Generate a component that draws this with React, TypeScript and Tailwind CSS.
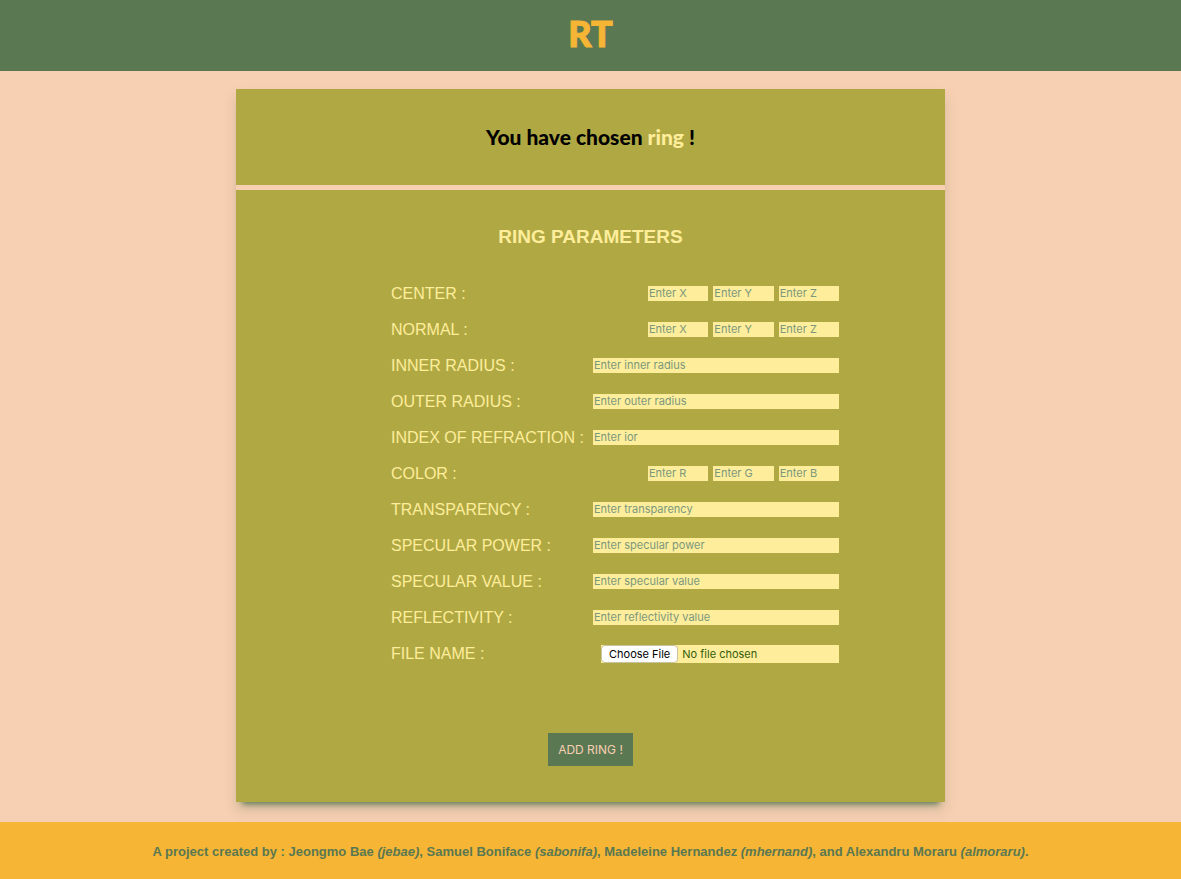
type Field = { label: string; name: string; hints: string[] };

const fields: Field[] = [
  { label: "CENTER :", name: "center", hints: ["Enter X", "Enter Y", "Enter Z"] },
  { label: "NORMAL :", name: "normal", hints: ["Enter X", "Enter Y", "Enter Z"] },
  { label: "INNER RADIUS :", name: "inner", hints: ["Enter inner radius"] },
  { label: "OUTER RADIUS :", name: "outer", hints: ["Enter outer radius"] },
  { label: "INDEX OF REFRACTION :", name: "ior", hints: ["Enter ior"] },
  { label: "COLOR :", name: "color", hints: ["Enter R", "Enter G", "Enter B"] },
  { label: "TRANSPARENCY :", name: "transparency", hints: ["Enter transparency"] },
  { label: "SPECULAR POWER :", name: "power", hints: ["Enter specular power"] },
  { label: "SPECULAR VALUE :", name: "value", hints: ["Enter specular value"] },
  { label: "REFLECTIVITY :", name: "reflectivity", hints: ["Enter reflectivity value"] },
];

const inputStyle =
  "h-[15px] min-w-0 flex-1 rounded-none bg-[#feed9b] px-px font-['Inter',sans-serif] text-[11px] leading-[15px] text-[#335c0a] outline-none placeholder:text-[#7b987b]";

function FieldRow({ label, name, hints }: Field) {
  return (
    <div className="flex h-9 items-center justify-between">
      <label htmlFor={`${name}-0`} className="whitespace-nowrap">
        {label}
      </label>
      <div className={hints.length > 1 ? "flex w-[191px] gap-[5px] pb-px" : "flex w-[246px] pb-px"}>
        {hints.map((hint, i) => (
          <input
            key={hint}
            id={`${name}-${i}`}
            name={`${name}-${i}`}
            type="text"
            aria-label={hint}
            placeholder={hint}
            className={inputStyle}
          />
        ))}
      </div>
    </div>
  );
}

export default function App() {
  return (
    <div className="flex min-h-screen flex-col bg-[#f7cfb2] font-['Liberation_Sans',Arial,sans-serif]">
      <header className="flex h-[71px] items-center justify-center bg-[#5a7852] pb-[6px]">
        <a
          href="#"
          className="font-['Lato',sans-serif] text-4xl font-black text-[#f6b534] [-webkit-text-stroke:1px_#f6b534]"
        >
          RT
        </a>
      </header>

      <main className="flex-1 pt-[18px] pb-5">
        <div className="mx-auto flex w-3/5 flex-col gap-[5px] bg-[#f7cfb2] shadow-[0_8px_6px_-6px_#5a7852,0_8px_12px_0_rgba(90,120,82,0.2)]">
          <section className="flex h-24 items-center justify-center bg-[#b0a943]">
            <h1 className="font-['Lato',sans-serif] text-[21px] font-black text-black">
              You have chosen <span className="text-[#feed9b]">ring</span> !
            </h1>
          </section>

          <section className="bg-[#b0a943] px-5 pt-[33px] pb-9 text-[#feed9b]">
            <h2 className="text-center text-[19px] leading-7 font-bold">RING PARAMETERS</h2>
            <form className="pt-[25px]" onSubmit={(e) => e.preventDefault()}>
              <div className="pl-[49px]">
                <div className="mx-auto w-[448px] max-w-full">
                  {fields.map((field) => (
                    <FieldRow key={field.name} {...field} />
                  ))}
                  <div className="flex h-9 items-center justify-between">
                    <label htmlFor="file">FILE NAME :</label>
                    <input
                      id="file"
                      type="file"
                      className="h-[18px] w-[238px] bg-[#feed9b] font-['Inter',sans-serif] text-[11px] leading-[18px] text-[#335c0a] file:mr-1 file:h-[18px] file:rounded file:border file:border-solid file:border-[#c9c4a0] file:bg-white file:px-[7px] file:leading-4 file:text-black"
                    />
                  </div>
                </div>
              </div>
              <div className="flex justify-center pt-[61px]">
                <button
                  type="submit"
                  className="h-[33px] bg-[#5a7852] px-[10px] font-['Inter',sans-serif] text-xs text-[#f7cfb2]"
                >
                  ADD RING !
                </button>
              </div>
            </form>
          </section>
        </div>
      </main>

      <footer className="bg-[#f6b534] px-4 pt-[21px] pb-[19px] text-center text-[13px] leading-[17px] font-bold text-[#5a7852]">
        A project created by : Jeongmo Bae <em>(jebae)</em>, Samuel Boniface <em>(sabonifa)</em>, Madeleine
        Hernandez <em>(mhernand)</em>, and Alexandru Moraru <em>(almoraru)</em>.
      </footer>
    </div>
  );
}
